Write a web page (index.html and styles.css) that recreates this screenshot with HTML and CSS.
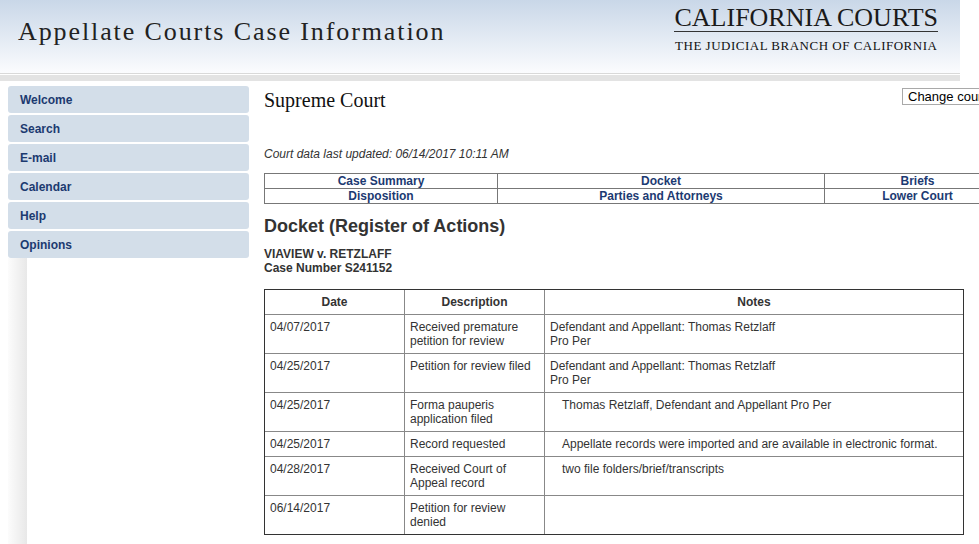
FILE: index.html
```html
<!DOCTYPE html>
<html lang="en">
<head>
<meta charset="utf-8">
<title>Appellate Courts Case Information</title>
<link rel="stylesheet" href="styles.css">
</head>
<body>
<header class="masthead">
  <div class="site-title">Appellate Courts Case Information</div>
  <div class="brand">
    <div class="brand-name">CALIFORNIA COURTS</div>
    <div class="brand-tag">THE JUDICIAL BRANCH OF CALIFORNIA</div>
  </div>
</header>
<div class="band"></div>
<div class="layout">
  <nav class="side">
    <div class="menu">
      <a class="nav-item" href="#">Welcome</a>
      <a class="nav-item" href="#">Search</a>
      <a class="nav-item" href="#">E-mail</a>
      <a class="nav-item" href="#">Calendar</a>
      <a class="nav-item" href="#">Help</a>
      <a class="nav-item" href="#">Opinions</a>
    </div>
    <div class="side-fill"></div>
  </nav>
  <main class="content">
    <div class="court-row">
      <h1 class="court-name">Supreme Court</h1>
      <span class="court-select">Change court</span>
    </div>
    <p class="updated">Court data last updated: 06/14/2017 10:11 AM</p>
    <table class="tabs">
      <colgroup><col class="tc1"><col class="tc2"><col class="tc3"></colgroup>
      <tr><td><a href="#">Case Summary</a></td><td><a href="#">Docket</a></td><td><a href="#">Briefs</a></td></tr>
      <tr><td><a href="#">Disposition</a></td><td><a href="#">Parties and Attorneys</a></td><td><a href="#">Lower Court</a></td></tr>
    </table>
    <h2 class="section-title">Docket (Register of Actions)</h2>
    <p class="case">VIAVIEW v. RETZLAFF<br>Case Number S241152</p>
    <table class="docket">
      <colgroup><col class="dc1"><col class="dc2"><col class="dc3"></colgroup>
      <tr><th>Date</th><th>Description</th><th>Notes</th></tr>
      <tr><td>04/07/2017</td><td>Received premature petition for review</td><td>Defendant and Appellant: Thomas Retzlaff<br>Pro Per</td></tr>
      <tr><td>04/25/2017</td><td>Petition for review filed</td><td>Defendant and Appellant: Thomas Retzlaff<br>Pro Per</td></tr>
      <tr><td>04/25/2017</td><td>Forma pauperis application filed</td><td class="indent">Thomas Retzlaff, Defendant and Appellant Pro Per</td></tr>
      <tr><td>04/25/2017</td><td>Record requested</td><td class="indent">Appellate records were imported and are available in electronic format.</td></tr>
      <tr><td>04/28/2017</td><td>Received Court of Appeal record</td><td class="indent">two file folders/brief/transcripts</td></tr>
      <tr class="last"><td>06/14/2017</td><td>Petition for review denied</td><td></td></tr>
    </table>
  </main>
</div>
</body>
</html>
```
FILE: styles.css
```css
html {
  overflow: hidden;
}
body {
  margin: 0;
  font-family: "Liberation Sans", Arial, sans-serif;
  font-size: 12px;
  line-height: 14px;
  color: #333;
  background: #fff;
}
.masthead {
  width: 960px;
  height: 74px;
  box-sizing: border-box;
  background: linear-gradient(#c9d7e8, #fbfcfe);
  border-bottom: 1px solid #d9d9d9;
  display: flex;
  justify-content: space-between;
  align-items: flex-start;
}
.site-title {
  font-family: "Liberation Serif", "Times New Roman", serif;
  font-size: 26px;
  line-height: 30px;
  letter-spacing: 1.9px;
  color: #222;
  margin-left: 18px;
  padding-top: 17px;
}
.brand {
  margin-right: 22px;
  padding-top: 5px;
  font-family: "Liberation Serif", "Times New Roman", serif;
  color: #1a1a1a;
  text-align: center;
}
.brand-name {
  font-size: 26px;
  line-height: 26px;
  border-bottom: 1px solid #333;
}
.brand-tag {
  font-size: 13px;
  line-height: 15px;
  letter-spacing: 0.5px;
  margin-top: 6px;
  color: #111;
}
.band {
  width: 960px;
  height: 6px;
  margin-top: 1px;
  background: #e3e3e3;
}
.layout {
  display: flex;
  align-items: flex-start;
  padding-top: 5px;
}
.side {
  width: 241px;
  margin-left: 8px;
  flex: none;
  display: flex;
  flex-direction: column;
}
.menu {
  display: flex;
  flex-direction: column;
  gap: 2px;
}
.nav-item {
  display: block;
  height: 27px;
  line-height: 28px;
  padding-left: 12px;
  background: #d3dee9;
  border-radius: 3px;
  color: #1c3a70;
  font-weight: bold;
  text-decoration: none;
}
.side-fill {
  width: 19px;
  height: 286px;
  background: linear-gradient(to right, #fcfcfc, #e8e8e8);
}
.content {
  margin-left: 15px;
  width: 746px;
  flex: none;
}
.court-row {
  display: flex;
  justify-content: space-between;
  align-items: flex-start;
}
.court-name {
  margin: 0;
  padding-top: 3px;
  font-family: "Liberation Serif", "Times New Roman", serif;
  font-size: 20px;
  line-height: 23px;
  font-weight: normal;
  color: #111;
}
.court-select {
  margin-top: 2px;
  width: 101px;
  height: 15px;
  box-sizing: content-box;
  border: 1px solid #a9a9a9;
  padding: 0 0 0 5px;
  font-size: 13px;
  line-height: 15px;
  color: #000;
  white-space: nowrap;
  overflow: hidden;
}
.updated {
  margin: 35px 0 0;
  font-style: italic;
  color: #333;
}
.tabs {
  margin-top: 12px;
  width: 746px;
  border-collapse: collapse;
  table-layout: fixed;
}
.tc1 { width: 233px; }
.tc2 { width: 327px; }
.tc3 { width: 186px; }
.tabs td {
  border: 1px solid #777;
  padding: 0;
  height: 14px;
  line-height: 14px;
  text-align: center;
}
.tabs a {
  color: #1c3a72;
  font-weight: bold;
  text-decoration: none;
}
.section-title {
  margin: 12px 0 0;
  font-size: 18px;
  line-height: 21px;
  font-weight: bold;
  color: #333;
}
.case {
  margin: 10px 0 0;
  font-weight: bold;
  color: #333;
}
.docket {
  margin-top: 14px;
  width: 700px;
  border: 1px solid #333;
  border-spacing: 0;
  border-collapse: separate;
  table-layout: fixed;
}
.dc1 { width: 140px; }
.dc2 { width: 140px; }
.dc3 { width: 418px; }
.docket th,
.docket td {
  padding: 5px;
  line-height: 14px;
  text-align: left;
  vertical-align: top;
  border-right: 1px solid #888;
  border-bottom: 1px solid #888;
  color: #333;
}
.docket th {
  text-align: center;
  font-weight: bold;
}
.docket th:last-child,
.docket td:last-child {
  border-right: none;
}
.docket .last td {
  border-bottom: none;
}
.docket td.indent {
  padding-left: 17px;
}
```
